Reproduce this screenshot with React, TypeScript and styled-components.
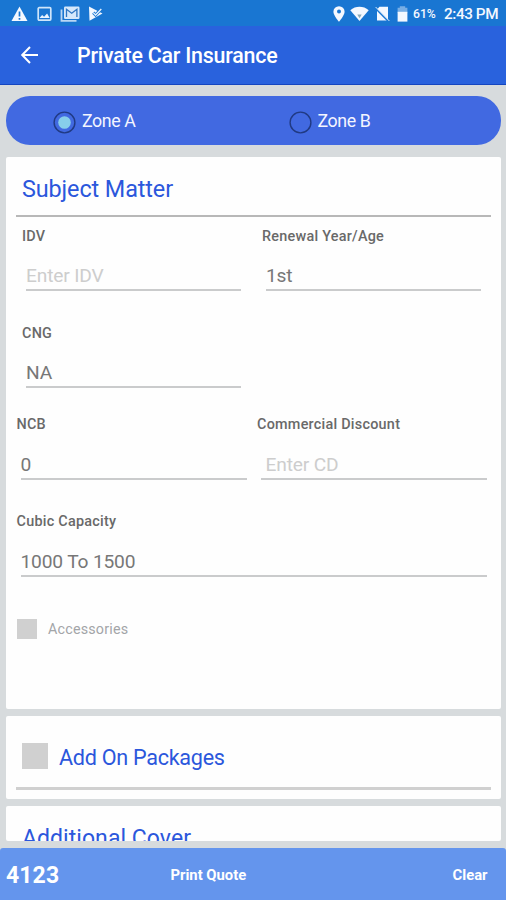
import React from 'react';
import styled, { createGlobalStyle } from 'styled-components';

const Global = createGlobalStyle`
  * { box-sizing: border-box; }
  body { margin: 0; background: #d7dbdd; font-family: Roboto, sans-serif; }
`;

const Screen = styled.div`
  width: 506px;
  height: 900px;
  display: flex;
  flex-direction: column;
  overflow: hidden;
  background: #d7dbdd;
`;

const StatusBar = styled.div`
  flex: none;
  height: 26px;
  background: #1976d2;
  color: #f4f8ff;
  display: flex;
  align-items: center;
  justify-content: space-between;
  padding: 2px 8px 0 11px;
`;

const StatusGroup = styled.div`
  display: flex;
  align-items: center;
`;

const StatusIcon = styled.svg<{ $w: number; $gap: number }>`
  display: block;
  width: ${p => p.$w}px;
  height: 16px;
  margin-right: ${p => p.$gap}px;
`;

const Battery = styled.span`
  width: 24px;
  margin-right: 7px;
  font-size: 12.2px;
  font-weight: 500;
  line-height: 16px;
`;

const Clock = styled.span`
  width: 54px;
  font-size: 15.3px;
  font-weight: 500;
  letter-spacing: -0.42px;
  line-height: 16px;
  white-space: nowrap;
`;

const AppBar = styled.header`
  flex: none;
  height: 59px;
  background: #2962dd;
  border-bottom: 1px solid #1546c0;
  display: flex;
  align-items: center;
  padding-left: 20px;
  color: #fff;
`;

const BackButton = styled.button`
  width: 20px;
  height: 20px;
  margin: 0 37px 0 0;
  padding: 0;
  border: 0;
  background: none;
  color: inherit;
  svg { display: block; }
`;

const Title = styled.h1`
  margin: 2px 0 0;
  font-size: 21.4px;
  font-weight: 500;
  letter-spacing: -0.22px;
  line-height: 26px;
`;

const Content = styled.main`
  flex: none;
  height: 756px;
  padding: 11px 5px 0 6px;
  overflow: hidden;
`;

const ZoneBar = styled.div`
  height: 48.5px;
  border-radius: 24px;
  background: #4169e1;
  display: grid;
  grid-template-columns: 235.5px 1fr;
  padding-left: 47px;
  margin-bottom: 12px;
`;

const ZoneOption = styled.label`
  display: flex;
  align-items: center;
  gap: 6px;
  color: #f3f5ff;
  font-size: 17.8px;
  letter-spacing: -0.4px;
  line-height: 24px;
  span { margin-top: 1px; }
  svg { display: block; margin-top: 5px; }
`;

const Card = styled.section<{ $h: number; $gap?: number }>`
  height: ${p => p.$h}px;
  margin-bottom: ${p => p.$gap ?? 0}px;
  padding: 0 10px;
  background: #fefefe;
  border-radius: 2px;
  overflow: hidden;
`;

const CardHeader = styled.div<{ $h: number; $line: number; $tone: string; $top: number }>`
  height: ${p => p.$h}px;
  padding: ${p => p.$top}px 0 0 6px;
  border-bottom: ${p => p.$line}px solid ${p => p.$tone};
  display: flex;
  align-items: flex-start;
`;

const CardTitle = styled.h2<{ $size: number; $spacing?: number }>`
  margin: 0;
  font-size: ${p => p.$size}px;
  letter-spacing: ${p => p.$spacing ?? 0}px;
  font-weight: 400;
  line-height: 30px;
  color: #2b57dc;
  white-space: nowrap;
`;

const CheckBox = styled.span<{ $size: number; $gap: number }>`
  flex: none;
  width: ${p => p.$size}px;
  height: ${p => p.$size}px;
  margin-right: ${p => p.$gap}px;
  background: #d0d0d0;
`;

const Fields = styled.div`
  padding-top: 10px;
`;

const FieldRow = styled.div<{ $inset?: boolean; $gap: number; $single?: boolean }>`
  display: grid;
  grid-template-columns: ${p => (p.$single ? '1fr' : p.$inset ? '219px 219px' : '230px 230px')};
  column-gap: ${p => (p.$inset ? 21 : 10.5)}px;
  padding: 0 ${p => (p.$single ? 4 : 0)}px 0 ${p => (p.$inset ? 6 : 0.5)}px;
  margin-bottom: ${p => p.$gap}px;
`;

const Field = styled.div`
  display: flex;
  flex-direction: column;
`;

const FieldLabel = styled.span`
  font-size: 14.4px;
  font-weight: 500;
  line-height: 20px;
  letter-spacing: 0.25px;
  color: #696969;
  white-space: nowrap;
`;

const FieldValue = styled.div<{ $hint?: boolean; $indent?: number; $raised?: boolean }>`
  margin: ${p => (p.$raised ? 15 : 16)}px 0 0 4px;
  height: 29px;
  padding-left: ${p => p.$indent ?? 0}px;
  border-bottom: 2px solid #cacbcc;
  font-size: 19.2px;
  letter-spacing: -0.17px;
  line-height: 27px;
  color: ${p => (p.$hint ? '#cdcdcd' : '#777')};
`;

const CheckRow = styled.label`
  display: flex;
  align-items: center;
  height: 20px;
  padding-left: 0.5px;
  color: #a3a5a8;
  font-size: 14.3px;
  letter-spacing: 0.2px;
`;

const Footer = styled.footer`
  flex: none;
  height: 52px;
  margin-top: 7px;
  border-radius: 3px 3px 0 0;
  background: #6495ed;
  color: #fff;
  display: grid;
  grid-template-columns: 164.5px 1fr auto;
  align-items: center;
  padding: 2px 18.5px 0 6px;
`;

const Premium = styled.strong`
  font-size: 23px;
  font-weight: 700;
  letter-spacing: 0.1px;
`;

const FooterAction = styled.button`
  padding: 0;
  border: 0;
  background: none;
  color: #fff;
  font: 700 14.8px/20px Roboto, sans-serif;
  text-align: left;
`;

const Radio = ({ on }: { on?: boolean }) => (
  <svg width="23" height="23" viewBox="0 0 23 23">
    <circle cx="11.5" cy="11.5" r="10.4" fill="none" stroke="#203a83" strokeWidth="1.4" />
    {on && <circle cx="11.5" cy="11.5" r="6.3" fill="#87ceeb" />}
  </svg>
);

type FieldProps = { label: string; value: string; hint?: boolean; indent?: number; raised?: boolean };

const FormField = ({ label, value, hint, indent, raised }: FieldProps) => (
  <Field>
    <FieldLabel>{label}</FieldLabel>
    <FieldValue $hint={hint} $indent={indent} $raised={raised}>{value}</FieldValue>
  </Field>
);

export default function App() {
  return (
    <>
      <Global />
      <Screen>
        <StatusBar>
          <StatusGroup>
            <StatusIcon $w={17} $gap={9} viewBox="0 0 17 16">
              <path d="M8.5 .5 16.5 15H.5Z" fill="currentColor" />
              <path d="M8.5 5.5v5M8.5 12v1.7" stroke="#1976d2" strokeWidth="1.7" />
            </StatusIcon>
            <StatusIcon $w={15} $gap={8} viewBox="0 0 15 16">
              <rect x="1.2" y="1.7" width="12.6" height="12.4" rx="1" fill="none" stroke="#cfe5fa" strokeWidth="1.7" />
              <path d="m2.5 12 2.6-3 2 1.8 3-3.2 2.6 4.4Z" fill="#e8f3ff" />
            </StatusIcon>
            <StatusIcon $w={20} $gap={8} viewBox="0 0 20 16">
              <path d="M1.5 3.5v11.3h15" fill="none" stroke="#b9d6f4" strokeWidth="1.8" />
              <rect x="4" y=".5" width="15.5" height="12.5" rx="1.2" fill="#d6e8fb" />
              <path d="M6.5 11V3.2l5.2 4 5.2-4V11" fill="none" stroke="#2f76c4" strokeWidth="1.3" />
            </StatusIcon>
            <StatusIcon $w={15} $gap={0} viewBox="0 0 15 16">
              <path d="M1 .6 14.5 7.4 1.5 14.8Z" fill="currentColor" />
              <path d="m5.2 6.6 2.4 2.4L13.5 2.6" fill="none" stroke="#1976d2" strokeWidth="3" />
              <path d="m5.2 6.6 2.4 2.4L13.3 3" fill="none" stroke="#e8f3ff" strokeWidth="1.3" />
            </StatusIcon>
          </StatusGroup>
          <StatusGroup>
            <StatusIcon $w={12} $gap={5} viewBox="0 0 12 16">
              <path d="M6 .2A5.6 5.6 0 0 0 .4 5.8C.4 9.5 6 15.8 6 15.8s5.6-6.3 5.6-10A5.6 5.6 0 0 0 6 .2Z" fill="currentColor" />
              <circle cx="6" cy="5.6" r="2" fill="#1976d2" />
            </StatusIcon>
            <StatusIcon $w={19} $gap={6} viewBox="0 0 19 16">
              <path d="M.3 4.2C5.5-.4 13.5-.4 18.7 4.2L9.5 15Z" fill="currentColor" />
              <path d="M7.3 8.6h4.4l-2.2 3.6Z" fill="#8aa9b8" />
            </StatusIcon>
            <StatusIcon $w={15} $gap={7} viewBox="0 0 15 16">
              <path d="M4.5.8H13V14.5H2V3.6Z" fill="currentColor" />
              <path d="M.6 2.4 13.4 15.4" stroke="#1976d2" strokeWidth="1.6" />
              <path d="M.6 1 14.4 15" stroke="#d9e9fa" strokeWidth="1" />
            </StatusIcon>
            <StatusIcon $w={11} $gap={5} viewBox="0 0 11 16">
              <path d="M.6 1.8h2.2V.3h5.4v1.5h2.2v5H.6Z" fill="#78aee5" />
              <path d="M.6 5.8h9.8v9.8H.6Z" fill="currentColor" />
            </StatusIcon>
            <Battery>61%</Battery>
            <Clock>2:43 PM</Clock>
          </StatusGroup>
        </StatusBar>
        <AppBar>
          <BackButton aria-label="Back">
            <svg width="20" height="20" viewBox="0 0 20 20" fill="none" stroke="currentColor" strokeWidth="2">
              <path d="M18 10H2.5M10 2 2.2 10l7.8 8" />
            </svg>
          </BackButton>
          <Title>Private Car Insurance</Title>
        </AppBar>
        <Content>
          <ZoneBar>
            <ZoneOption><Radio on /><span>Zone A</span></ZoneOption>
            <ZoneOption><Radio /><span>Zone B</span></ZoneOption>
          </ZoneBar>
          <Card $h={552} $gap={7}>
            <CardHeader $h={60} $line={2} $tone="#b8b8b8" $top={17}>
              <CardTitle $size={23.4} $spacing={-0.1}>Subject Matter</CardTitle>
            </CardHeader>
            <Fields>
              <FieldRow $inset $gap={33}>
                <FormField label="IDV" value="Enter IDV" hint raised />
                <FormField label="Renewal Year/Age" value="1st" raised />
              </FieldRow>
              <FieldRow $inset $gap={27.5}>
                <FormField label="CNG" value="NA" raised />
              </FieldRow>
              <FieldRow $gap={32}>
                <FormField label="NCB" value="0" />
                <FormField label="Commercial Discount" value="Enter CD" hint indent={4.5} />
              </FieldRow>
              <FieldRow $single $gap={42}>
                <FormField label="Cubic Capacity" value="1000 To 1500" />
              </FieldRow>
              <CheckRow><CheckBox $size={20} $gap={11.5} />Accessories</CheckRow>
            </Fields>
          </Card>
          <Card $h={83.5} $gap={7}>
            <CardHeader $h={74} $line={3} $tone="#d0d0d0" $top={27}>
              <CheckBox $size={26} $gap={11} />
              <CardTitle $size={21.6} $spacing={-0.28}>Add On Packages</CardTitle>
            </CardHeader>
          </Card>
          <Card $h={35}>
            <CardHeader $h={74} $line={3} $tone="#d0d0d0" $top={18}>
              <CardTitle $size={23} $spacing={0.05}>Additional Cover</CardTitle>
            </CardHeader>
          </Card>
        </Content>
        <Footer>
          <Premium>4123</Premium>
          <FooterAction>Print Quote</FooterAction>
          <FooterAction>Clear</FooterAction>
        </Footer>
      </Screen>
    </>
  );
}
